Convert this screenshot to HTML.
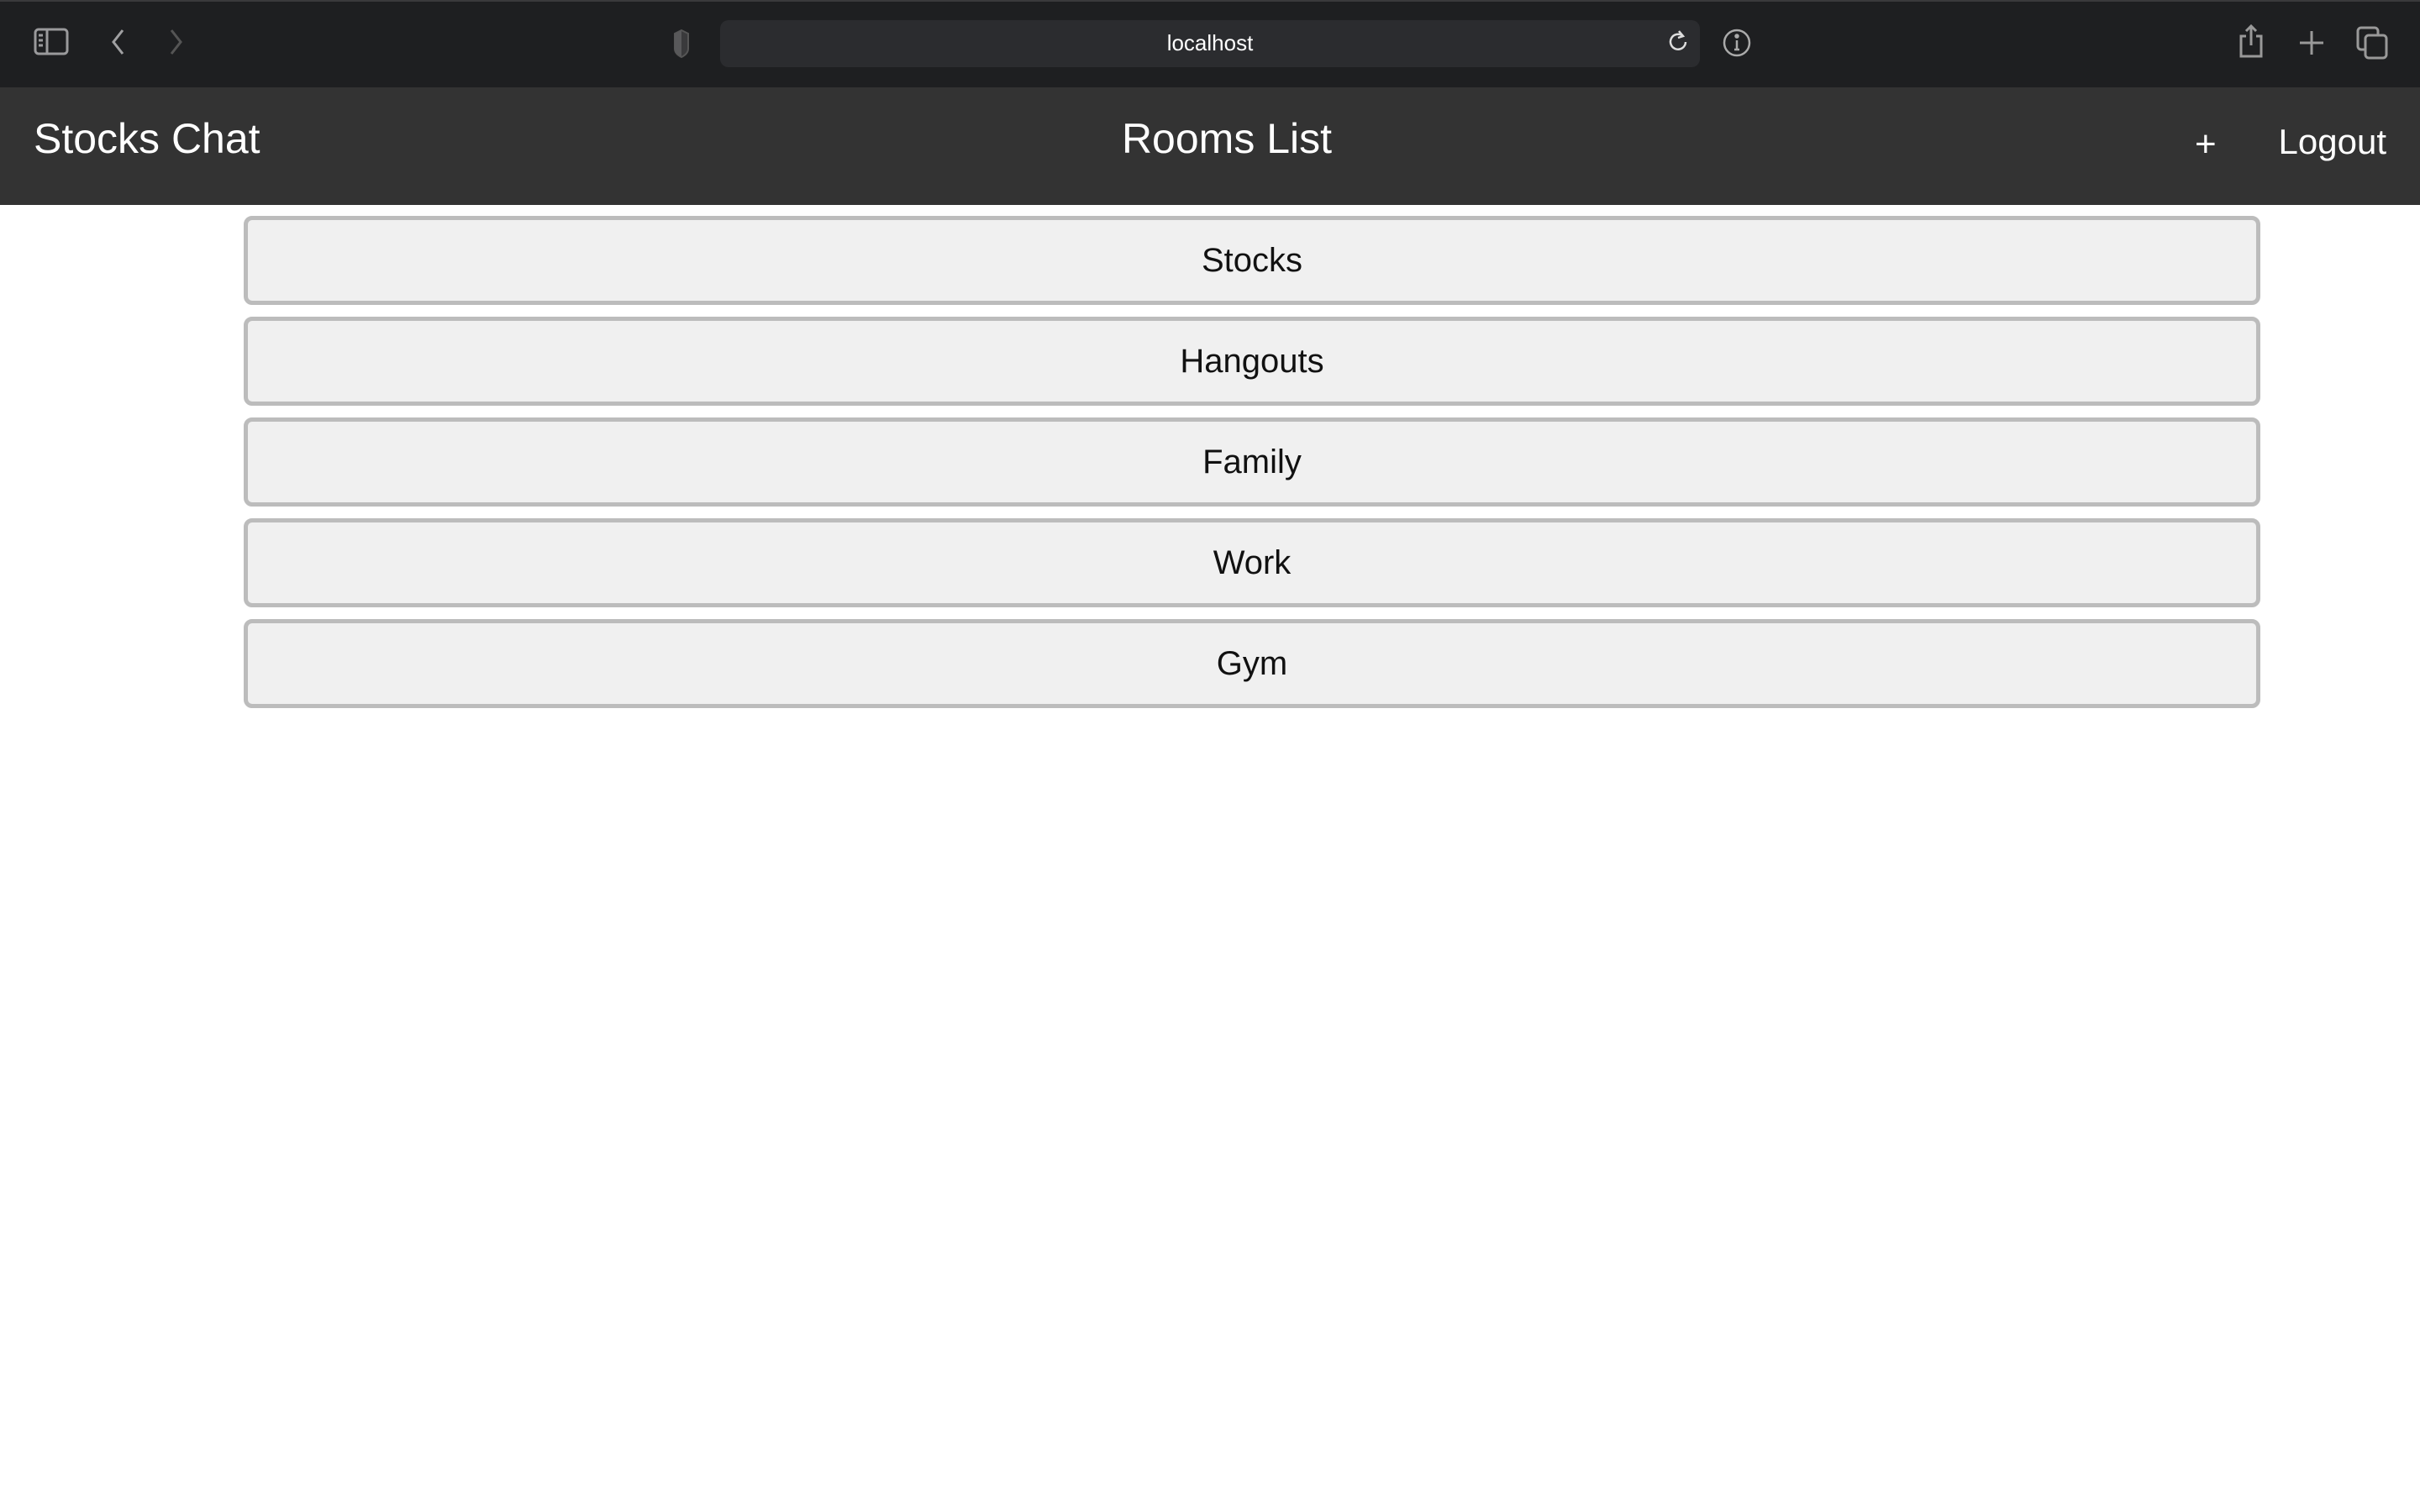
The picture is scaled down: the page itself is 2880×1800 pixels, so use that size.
<!DOCTYPE html>
<html><head><meta charset="utf-8"><style>
*{margin:0;padding:0;box-sizing:border-box}
body{width:2880px;height:1800px;background:#fff;font-family:"Liberation Sans",sans-serif;position:relative;overflow:hidden}
.tb{position:absolute;left:0;top:0;width:2880px;height:104px;background:#1e1f21;border-top:2px solid #3a3a3c}
.url{position:absolute;left:857px;top:22px;width:1166px;height:56px;border-radius:10px;background:#2b2c2f;color:#fff;font-size:26px;text-align:center;line-height:54px}
.hd{position:absolute;left:0;top:104px;width:2880px;height:140px;background:#333}
.hd div{position:absolute;color:#fff}
.btn{position:absolute;left:290px;width:2400px;height:106px;background:#f0f0f0;border:5px solid #bcbcbc;border-radius:10px;text-align:center;font-size:40px;line-height:96px;color:#111}
svg{position:absolute}
</style></head><body>
<div class="tb">
<svg style="left:40px;top:31px" width="42" height="34" viewBox="0 0 42 34" fill="none" stroke="#9a9a9c" stroke-width="3"><rect x="2" y="2" width="38" height="29" rx="4"/><line x1="16" y1="2" x2="16" y2="31"/><line x1="6" y1="9" x2="11" y2="9"/><line x1="6" y1="15" x2="11" y2="15"/><line x1="6" y1="21" x2="11" y2="21"/></svg>
<svg style="left:130px;top:31px" width="20" height="34" viewBox="0 0 20 34" fill="none" stroke="#a0a0a2" stroke-width="3"><path d="M16 3 L5 17 L16 31"/></svg>
<svg style="left:200px;top:31px" width="20" height="34" viewBox="0 0 20 34" fill="none" stroke="#555" stroke-width="3"><path d="M4 3 L15 17 L4 31"/></svg>
<svg style="left:797px;top:32px" width="28" height="36" viewBox="0 0 20 36"><path d="M10 2 L18 6 L18 24 Q18 30 10 34 Q2 30 2 24 L2 6 Z" fill="#3a3a3c" stroke="#555" stroke-width="2"/><path d="M10 2 L2 6 L2 24 Q2 30 10 34 Z" fill="#58585a"/></svg>
<div class="url">localhost</div>
<svg style="left:1984px;top:32px" width="26" height="30" viewBox="0 0 26 30" fill="none" stroke="#ddd" stroke-width="2.5"><path d="M19 9 A9 9 0 1 0 22 16"/><path d="M14 3 L19 9 L13 11"/></svg>
<svg style="left:2049px;top:31px" width="36" height="36" viewBox="0 0 36 36" fill="none" stroke="#aaa" stroke-width="2.5"><circle cx="18" cy="18" r="15"/><line x1="18" y1="15" x2="18" y2="26"/><line x1="15" y1="26" x2="21" y2="26"/><circle cx="18" cy="10" r="1.5" fill="#aaa"/></svg>
<svg style="left:2664px;top:26px" width="30" height="42" viewBox="0 0 30 42" fill="none" stroke="#999" stroke-width="3"><path d="M9 15 L3 15 L3 39 L27 39 L27 15 L21 15"/><path d="M15 3 L15 26 M9 9 L15 3 L21 9"/></svg>
<svg style="left:2736px;top:34px" width="30" height="30" viewBox="0 0 30 30" stroke="#999" stroke-width="3"><line x1="15" y1="1" x2="15" y2="29"/><line x1="1" y1="15" x2="29" y2="15"/></svg>
<svg style="left:2804px;top:29px" width="38" height="40" viewBox="0 0 38 40" fill="none" stroke="#999" stroke-width="3"><rect x="2" y="2" width="24" height="26" rx="4"/><rect x="11" y="11" width="25" height="27" rx="4" fill="#1e1f21"/></svg>
</div>
<div class="hd">
<div style="left:40px;top:32px;font-size:50px">Stocks Chat</div>
<div style="left:0;width:2920px;text-align:center;top:32px;font-size:50px">Rooms List</div>
<div style="left:2612px;top:43px;font-size:44px">+</div>
<div style="right:40px;top:41px;font-size:42px">Logout</div>
</div>
<div class="btn" style="top:257px">Stocks</div>
<div class="btn" style="top:377px">Hangouts</div>
<div class="btn" style="top:497px">Family</div>
<div class="btn" style="top:617px">Work</div>
<div class="btn" style="top:737px">Gym</div>
</body></html>
